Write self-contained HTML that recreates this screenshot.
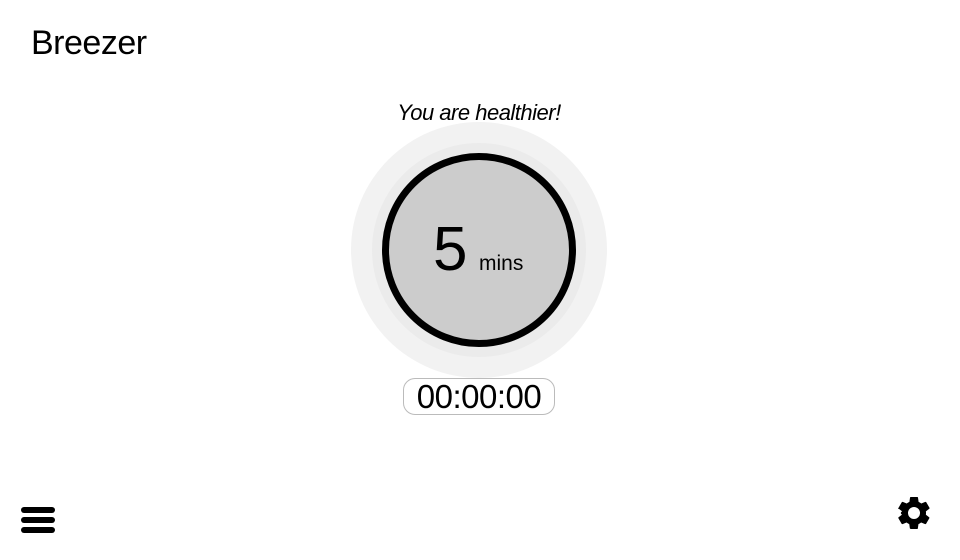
<!DOCTYPE html>
<html><head><meta charset="utf-8"><style>
body{margin:0;width:960px;height:560px;background:#fff;position:relative;overflow:hidden;font-family:"Liberation Sans",sans-serif;color:#000}
.t{position:absolute;left:31px;top:24px;font-size:34px;letter-spacing:-0.5px}
.h{position:absolute;left:0;width:958px;top:100px;text-align:center;font-size:22px;font-style:italic;letter-spacing:-0.5px}
.c{position:absolute;border-radius:50%}
.box{position:absolute;left:403px;top:378px;width:150px;height:35px;border:1px solid #bbb;border-radius:12px;text-align:center;font-size:33px;line-height:35px;letter-spacing:-0.5px}
.bar{position:absolute;left:21px;width:34px;height:6px;background:#000;border-radius:3px}
</style></head><body>
<div class="t">Breezer</div>
<div class="h">You are healthier!</div>
<div class="c" style="left:351px;top:122px;width:256px;height:256px;background:#f2f2f2"></div>
<div class="c" style="left:372px;top:143px;width:214px;height:214px;background:#ebebeb"></div>
<div class="c" style="left:382px;top:153px;width:180px;height:180px;border:7px solid #000;background:#ccc"></div>
<div style="position:absolute;left:433px;top:215px;font-size:62px;line-height:70px">5</div>
<div style="position:absolute;left:479px;top:252px;font-size:21px">mins</div>
<div class="box">00:00:00</div>
<div class="bar" style="top:507px"></div>
<div class="bar" style="top:517px"></div>
<div class="bar" style="top:527px"></div>
<svg style="position:absolute;left:894px;top:493px" width="40" height="40" viewBox="0 0 24 24"><path fill="#000" d="M19.14 12.94c.04-.3.06-.61.06-.94s-.02-.64-.07-.94l2.03-1.58a.49.49 0 0 0 .12-.61l-1.920-3.32a.49.49 0 0 0-.59-.22l-2.39.96c-.5-.38-1.03-.7-1.62-.94l-.36-2.54a.48.48 0 0 0-.48-.41h-3.84c-.24 0-.43.17-.47.41l-.36 2.54c-.59.24-1.13.57-1.62.94l-2.39-.96a.48.48 0 0 0-.59.22L2.74 8.87c-.12.21-.8.47.12.61l2.03 1.58c-.5.3-.8.65-.8.94s.2.64.7.94l-2.03 1.58a.49.49 0 0 0-.12.61l1.92 3.32c.12.22.37.29.59.22l2.39-.96c.5.38 1.03.7 1.62.94l.36 2.54c.5.24.24.41.48.41h3.840c.24 0 .44-.17.47-.41l.36-2.54c.59-.24 1.13-.56 1.62-.94l2.39.96c.22.08.47 0 .59-.22l1.92-3.32c.12-.22.07-.47-.12-.61l-2.01-1.58zM12 15.6A3.6 3.6 0 1 1 12 8.4a3.6 3.6 0 0 1 0 7.2z"/></svg>
</body></html>
